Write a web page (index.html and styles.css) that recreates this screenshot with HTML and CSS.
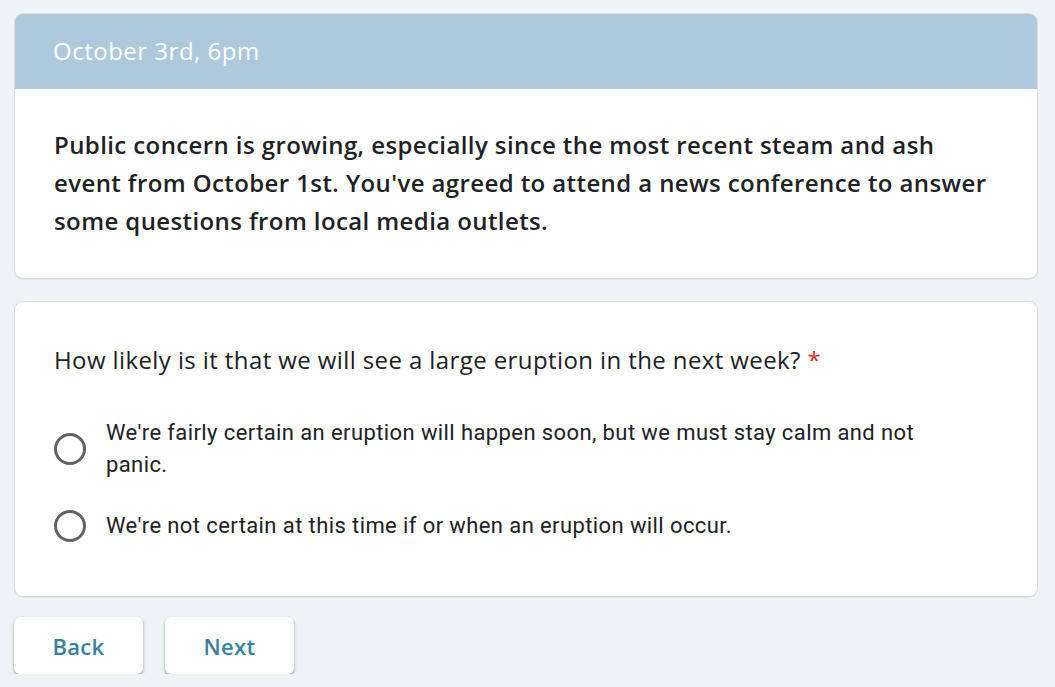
FILE: index.html
```html
<!DOCTYPE html>
<html>
<head>
<meta charset="utf-8">
<link rel="stylesheet" href="styles.css">
</head>
<body>
<div class="page">
  <section class="card intro">
    <div class="card-header">October 3rd, 6pm</div>
    <div class="card-body">
      <p class="desc">Public concern is growing, especially since the most recent steam and ash event from October 1st. You've agreed to attend a news conference to answer some questions from local media outlets.</p>
    </div>
  </section>
  <section class="card question">
    <div class="q-title">How likely is it that we will see a large eruption in the next week? <span class="req">*</span></div>
    <div class="options">
      <label class="option"><span class="radio"></span><span class="opt-text">We're fairly certain an eruption will happen soon, but we must stay calm and not panic.</span></label>
      <label class="option"><span class="radio"></span><span class="opt-text">We're not certain at this time if or when an eruption will occur.</span></label>
    </div>
  </section>
  <div class="nav">
    <button class="btn">Back</button>
    <button class="btn">Next</button>
  </div>
</div>
</body>
</html>
```
FILE: styles.css
```css
html, body {
  margin: 0;
  padding: 0;
  background: #eef3f6;
}
.page {
  padding: 13px 17px 0 14px;
  display: flex;
  flex-direction: column;
  gap: 22px;
  font-family: "Open Sans", "Liberation Sans", sans-serif;
}
.card {
  background: #fff;
  border: 1px solid #dadce0;
  border-radius: 9px;
  overflow: hidden;
  box-shadow: 0 1px 0 rgba(60,64,67,0.08);
}
.card-header {
  height: 76px;
  background: #aec9db;
  color: #fff;
  font-size: 24px;
  letter-spacing: 0.5px;
  line-height: 76px;
  padding-left: 39px;
  margin: -1px -1px 0 -1px;
}
.card-body {
  padding: 37px 40px 38px 39px;
}
.desc {
  margin: 0;
  font-size: 24px;
  line-height: 38px;
  font-weight: 600;
  color: #202124;
  letter-spacing: 0.4px;
  max-width: 945px;
}
.question {
  padding: 42px 40px 54px 39px;
}
.q-title {
  font-size: 24px;
  line-height: 32px;
  color: #202124;
  letter-spacing: 0.4px;
}
.req {
  color: #d93025;
}
.options {
  margin-top: 41px;
  display: flex;
  flex-direction: column;
  gap: 29px;
}
.option {
  display: flex;
  align-items: center;
  gap: 20px;
}
.radio {
  flex: none;
  width: 26px;
  height: 26px;
  border: 3px solid #5f6368;
  border-radius: 50%;
}
.opt-text {
  font-family: Roboto, "Liberation Sans", sans-serif;
  font-size: 22px;
  line-height: 32px;
  color: #202124;
  letter-spacing: 0.4px;
  max-width: 860px;
}
.nav {
  display: flex;
  gap: 22px;
  margin-top: -2px;
}
.btn {
  width: 129px;
  height: 57px;
  border: none;
  background: #fff;
  border-radius: 6px;
  box-shadow: 0 1px 2px rgba(60,64,67,0.3), 0 2px 3px 1px rgba(60,64,67,0.15);
  color: #3a7f9c;
  font-family: "Open Sans", "Liberation Sans", sans-serif;
  font-size: 22px;
  font-weight: 600;
  letter-spacing: 0.3px;
  padding: 0;
}
```
